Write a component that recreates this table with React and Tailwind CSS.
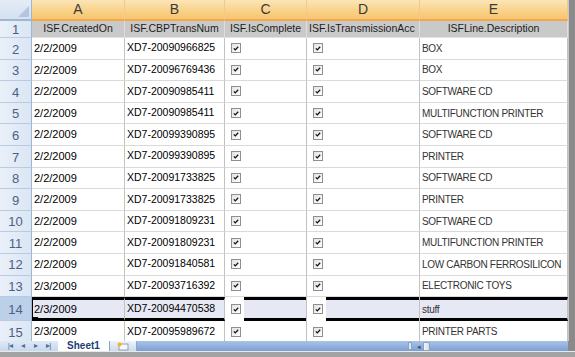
import React from 'react'

const rows = [
  { n: 2, a: '2/2/2009', b: 'XD7-20090966825', e: 'BOX' },
  { n: 3, a: '2/2/2009', b: 'XD7-20096769436', e: 'BOX' },
  { n: 4, a: '2/2/2009', b: 'XD7-20090985411', e: 'SOFTWARE CD' },
  { n: 5, a: '2/2/2009', b: 'XD7-20090985411', e: 'MULTIFUNCTION PRINTER' },
  { n: 6, a: '2/2/2009', b: 'XD7-20099390895', e: 'SOFTWARE CD' },
  { n: 7, a: '2/2/2009', b: 'XD7-20099390895', e: 'PRINTER' },
  { n: 8, a: '2/2/2009', b: 'XD7-20091733825', e: 'SOFTWARE CD' },
  { n: 9, a: '2/2/2009', b: 'XD7-20091733825', e: 'PRINTER' },
  { n: 10, a: '2/2/2009', b: 'XD7-20091809231', e: 'SOFTWARE CD' },
  { n: 11, a: '2/2/2009', b: 'XD7-20091809231', e: 'MULTIFUNCTION PRINTER' },
  { n: 12, a: '2/2/2009', b: 'XD7-20091840581', e: 'LOW CARBON FERROSILICON' },
  { n: 13, a: '2/3/2009', b: 'XD7-20093716392', e: 'ELECTRONIC TOYS' },
  { n: 14, a: '2/3/2009', b: 'XD7-20094470538', e: 'stuff', sel: true },
  { n: 15, a: '2/3/2009', b: 'XD7-20095989672', e: 'PRINTER PARTS' },
]

const font = { fontFamily: '"Liberation Sans", Arial, sans-serif' }

function Check() {
  return (
    <span className="w-[10px] h-[10px] border border-[#8e8f8f] bg-gradient-to-br from-[#e2e2e2] to-white flex items-center justify-center flex-shrink-0">
      <svg width="6" height="5" viewBox="0 0 6 5">
        <path d="M0.8 2.4 L2.3 3.9 L5.2 0.8" fill="none" stroke="#111" strokeWidth="1.3" />
      </svg>
    </span>
  )
}

function RowHead({ n, sel, h }) {
  return (
    <div className={`w-[32px] flex-shrink-0 border-r border-b border-r-[#9eb6ce] border-b-[#b8cbe2] flex items-center justify-center pt-[2px] text-[13px] text-[#4a6283] ${h} ${sel ? 'bg-[#bcd0ea]' : 'bg-gradient-to-r from-[#e9f0f9] to-[#dbe6f4]'}`}>
      {n}
    </div>
  )
}

// plain text cell
function TCell({ w, children, sel, first, size }) {
  const base = `${w} flex-shrink-0 flex items-center whitespace-nowrap overflow-hidden border-r border-r-[#c2c2c2] relative ${size}`
  if (sel) {
    return (
      <div className={`${base} bg-[#e6e8f4] border-y-[3px] border-y-black ${first ? 'border-l border-l-black pl-[1px]' : 'pl-[2px]'}`}>
        {children}
        {first && <span className="absolute left-0 bottom-[-3px] w-[5px] h-[4px] bg-black" />}
      </div>
    )
  }
  return (
    <div className={`${base} border-b border-b-[#dadada] pl-[2px]`}>
      {children}
    </div>
  )
}

function CheckCell({ w, sel }) {
  if (sel) {
    return (
      <div className={`${w} flex-shrink-0 flex border-r border-r-[#c2c2c2]`}>
        <div className="w-[19px] bg-white flex items-center pl-[6px]">
          <Check />
        </div>
        <div className="flex-1 bg-[#e6e8f4] border-y-[3px] border-y-black" />
      </div>
    )
  }
  return (
    <div className={`${w} flex-shrink-0 flex items-center pl-[6px] border-r border-b border-r-[#c2c2c2] border-b-[#dadada]`}>
      <Check />
    </div>
  )
}

function ColHead({ w, children }) {
  return (
    <div className={`${w} flex-shrink-0 flex items-center justify-center text-[14px] text-[#3a3a3a] border-r border-r-[#f2c987] border-b-2 border-b-[#f2a74c] bg-gradient-to-b from-[#fbe5b7] via-[#f9d48e] to-[#f7c56e]`}>
      {children}
    </div>
  )
}

function TitleCell({ w, children, left }) {
  return (
    <div className={`${w} flex-shrink-0 flex items-center ${left ? 'justify-start pl-[2px]' : 'justify-center'} whitespace-nowrap overflow-hidden text-[10.5px] text-[#1c1c1c] bg-[#c9c9c9] border-r border-b border-r-[#dedede] border-b-[#e2e2e2]`}>
      {children}
    </div>
  )
}

function TabNav() {
  return (
    <div className="w-[58px] h-full flex items-center justify-around px-[3px] bg-gradient-to-b from-[#dfe9f6] to-[#c7d8ee]">
      {['|◂', '◂', '▸', '▸|'].map((t, i) => (
        <span key={i} className="text-[8px] leading-none text-[#4e6c98] tracking-[-1px]">{t}</span>
      ))}
    </div>
  )
}

export default function App() {
  return (
    <div className="w-[575px] h-[357px] bg-white overflow-hidden flex flex-col" style={font}>
      <div className="h-[341px] flex overflow-hidden">
        <div className="w-[568px] flex-shrink-0 flex flex-col">
          {/* column letters */}
          <div className="h-[21px] flex flex-shrink-0">
            <div className="w-[32px] flex-shrink-0 border-r border-b-2 border-r-[#9eb6ce] border-b-[#9eb6ce] bg-gradient-to-b from-[#e4ecf7] to-[#d5e1f1] flex items-end justify-end pr-[2px] pb-[2px]">
              <svg width="11" height="11" viewBox="0 0 11 11">
                <polygon points="11,0 11,11 0,11" fill="#b4c6dd" />
              </svg>
            </div>
            <ColHead w="w-[93px]">A</ColHead>
            <ColHead w="w-[100px]">B</ColHead>
            <ColHead w="w-[82px]">C</ColHead>
            <ColHead w="w-[113px]">D</ColHead>
            <ColHead w="w-[148px]">E</ColHead>
          </div>
          {/* row 1 */}
          <div className="h-[17px] flex flex-shrink-0">
            <RowHead n={1} h="h-[17px]" />
            <TitleCell w="w-[93px]">ISF.CreatedOn</TitleCell>
            <TitleCell w="w-[100px]">ISF.CBPTransNum</TitleCell>
            <TitleCell w="w-[82px]">ISF.IsComplete</TitleCell>
            <TitleCell w="w-[113px]" left>ISF.IsTransmissionAcc</TitleCell>
            <TitleCell w="w-[148px]">ISFLine.Description</TitleCell>
          </div>
          {rows.map((r) => {
            const h = r.sel ? 'h-[24px]' : r.n === 15 ? 'h-[22px]' : 'h-[21.6px]'
            return (
              <div key={r.n} className={`${h} flex flex-shrink-0`}>
                <RowHead n={r.n} sel={r.sel} h={h} />
                <TCell w="w-[93px]" sel={r.sel} first size="text-[11px] text-black">{r.a}</TCell>
                <TCell w="w-[100px]" sel={r.sel} size="text-[10.5px] text-black">{r.b}</TCell>
                <CheckCell w="w-[82px]" sel={r.sel} />
                <CheckCell w="w-[113px]" sel={r.sel} />
                <TCell w="w-[148px]" sel={r.sel} size="text-[10px] tracking-[-0.3px] text-[#333]">{r.e}</TCell>
              </div>
            )
          })}
        </div>
        <div className="w-[7px] flex-shrink-0 bg-[#8a8a8a] border-l border-l-[#c8c8c8]" />
      </div>

      {/* sheet tabs + horizontal scroll */}
      <div className="h-[10px] flex flex-shrink-0 items-stretch">
        <TabNav />
        <div className="w-[52px] bg-white flex items-center justify-center text-[10px] font-bold leading-none text-[#1d3f78] border-r border-[#8aa6cf]">
          Sheet1
        </div>
        <div className="w-[27px] bg-gradient-to-b from-[#eef3fa] to-[#cbdaee] flex items-center justify-center border-r border-[#8aa6cf]">
          <svg width="14" height="9" viewBox="0 0 14 9">
            <rect x="3" y="2" width="9" height="6" fill="#f4f6f9" stroke="#7d8ea8" strokeWidth="0.8" />
            <circle cx="3.5" cy="2.5" r="2" fill="#f5b21d" />
          </svg>
        </div>
        <div className="flex-1 flex items-center bg-gradient-to-b from-[#a9c3e7] to-[#7c9fd3]">
          <div className="w-[271px]" />
          <span className="w-[4px] h-[8px] bg-[#dde6f2] border border-[#8ba2c4]" />
          <span className="ml-[5px] text-[7px] leading-none text-[#3c4f6c]">◂</span>
          <span className="ml-[2px] w-[7px] h-[9px] rounded-[1px] bg-gradient-to-r from-[#f4f7fb] to-[#cfdbeb] border border-[#8ba2c4]" />
        </div>
        <div className="w-[7px] bg-[#8a8a8a]" />
      </div>
      <div className="flex-1 bg-[#a3a3a3] border-t border-t-[#e8e8e8]" />
    </div>
  )
}
